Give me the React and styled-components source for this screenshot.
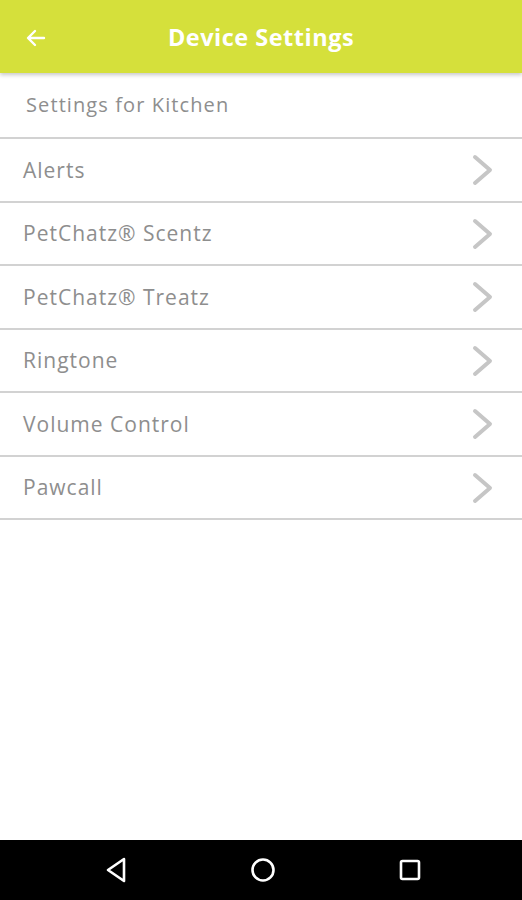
import React from "react";
import styled, { createGlobalStyle } from "styled-components";

const GlobalStyle = createGlobalStyle`
  html, body {
    margin: 0;
    padding: 0;
    background: #ffffff;
  }
  #root {
    height: 900px;
  }
`;

const items = [
  "Alerts",
  "PetChatz® Scentz",
  "PetChatz® Treatz",
  "Ringtone",
  "Volume Control",
  "Pawcall",
];

const BackArrow = () => (
  <svg width="24" height="24" viewBox="0 0 24 24">
    <path
      d="M20 12H5M11 5l-7 7 7 7"
      fill="none"
      stroke="#ffffff"
      strokeWidth="2.4"
      strokeLinecap="round"
      strokeLinejoin="round"
    />
  </svg>
);

const Chevron = () => (
  <svg width="24" height="32" viewBox="0 0 24 32">
    <path
      d="M4 3l15 13L4 29"
      fill="none"
      stroke="#c6c6c6"
      strokeWidth="4"
      strokeLinecap="round"
      strokeLinejoin="round"
    />
  </svg>
);

export default function App() {
  return (
    <>
      <GlobalStyle />
      <Screen>
        <Header>
          <BackButton>
            <BackArrow />
          </BackButton>
          <Title>Device Settings</Title>
        </Header>
        <SubHeader>Settings for Kitchen</SubHeader>
        <List>
          {items.map((label) => (
            <Row key={label}>
              <span>{label}</span>
              <Chevron />
            </Row>
          ))}
        </List>
        <Spacer />
        <NavBar>
          <svg width="24" height="28" viewBox="0 0 24 28">
            <path
              d="M20 3L4 14l16 11z"
              fill="none"
              stroke="#ffffff"
              strokeWidth="2.6"
              strokeLinejoin="round"
            />
          </svg>
          <svg width="26" height="26" viewBox="0 0 26 26">
            <circle cx="13" cy="13" r="10.5" fill="none" stroke="#ffffff" strokeWidth="2.6" />
          </svg>
          <svg width="24" height="24" viewBox="0 0 24 24">
            <rect x="3" y="3" width="18" height="18" rx="1.5" fill="none" stroke="#ffffff" strokeWidth="2.6" />
          </svg>
        </NavBar>
      </Screen>
    </>
  );
}

const Screen = styled.div`
  width: 522px;
  height: 900px;
  display: flex;
  flex-direction: column;
  background: #ffffff;
  font-family: "Open Sans", Lato, sans-serif;
`;

const Header = styled.div`
  position: relative;
  z-index: 1;
  height: 73px;
  flex-shrink: 0;
  display: flex;
  align-items: center;
  justify-content: center;
  background-color: #d5e03b;
  box-shadow: 0 2px 4px rgba(0, 0, 0, 0.22);
`;

const BackButton = styled.div`
  position: absolute;
  left: 24px;
  top: 26px;
  display: flex;
`;

const Title = styled.h1`
  margin: 0;
  color: #ffffff;
  font-size: 23.5px;
  font-weight: 700;
  letter-spacing: 0.5px;
`;

const SubHeader = styled.div`
  height: 66px;
  box-sizing: border-box;
  display: flex;
  align-items: center;
  padding: 0 0 2px 26px;
  border-bottom: 2px solid #d2d2d2;
  color: #8e8e8e;
  font-size: 20px;
  font-weight: 400;
  letter-spacing: 1.1px;
`;

const List = styled.div`
  display: flex;
  flex-direction: column;
`;

const Row = styled.div`
  height: 63.5px;
  box-sizing: border-box;
  display: flex;
  align-items: center;
  justify-content: space-between;
  padding: 0 27px 0 23px;
  border-bottom: 2px solid #d2d2d2;
  color: #8e8e8e;
  font-size: 21px;
  font-weight: 400;
  letter-spacing: 1px;

  svg {
    margin-top: 1px;
  }
`;

const Spacer = styled.div`
  flex: 1;
`;

const NavBar = styled.div`
  height: 60px;
  flex-shrink: 0;
  display: flex;
  align-items: center;
  justify-content: center;
  gap: 122px;
  padding-left: 4px;
  background: #000000;
`;
